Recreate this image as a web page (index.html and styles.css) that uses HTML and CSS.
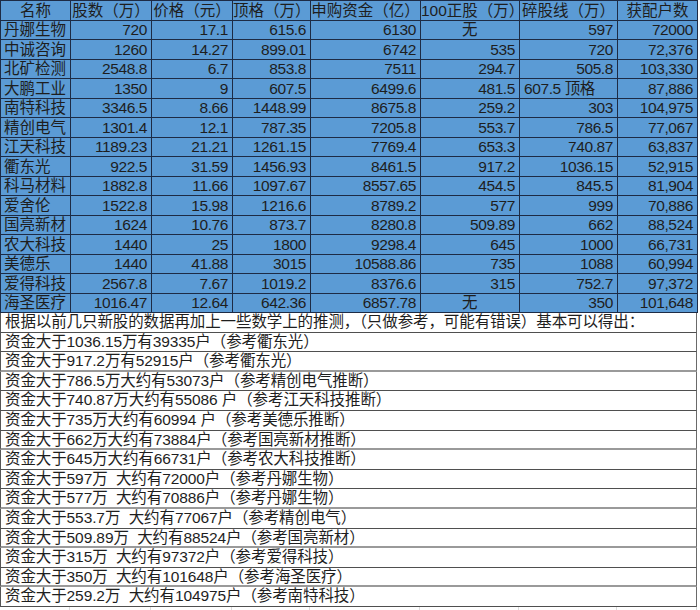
FILE: index.html
```html
<!DOCTYPE html>
<html lang="zh-CN">
<head>
<meta charset="utf-8">
<title>新股申购数据</title>
<link rel="stylesheet" href="styles.css">
</head>
<body>
<div class="sheet">
  <table class="data">
    <colgroup>
      <col class="c1"><col class="c2"><col class="c3"><col class="c4"><col class="c5"><col class="c6"><col class="c7"><col class="c8">
    </colgroup>
    <thead>
      <tr><th>名称</th><th>股数（万）</th><th>价格（元）</th><th>顶格（万）</th><th>申购资金（亿）</th><th class="ov">100正股（万）</th><th>碎股线（万）</th><th>获配户数</th></tr>
    </thead>
    <tbody>
      <tr><td class="n">丹娜生物</td><td>720</td><td>17.1</td><td>615.6</td><td>6130</td><td class="ctr">无</td><td>597</td><td>72000</td></tr>
      <tr><td class="n">中诚咨询</td><td>1260</td><td>14.27</td><td>899.01</td><td>6742</td><td>535</td><td>720</td><td>72,376</td></tr>
      <tr><td class="n">北矿检测</td><td>2548.8</td><td>6.7</td><td>853.8</td><td>7511</td><td>294.7</td><td>505.8</td><td>103,330</td></tr>
      <tr><td class="n">大鹏工业</td><td>1350</td><td>9</td><td>607.5</td><td>6499.6</td><td>481.5</td><td class="txt">607.5 顶格</td><td>87,886</td></tr>
      <tr><td class="n">南特科技</td><td>3346.5</td><td>8.66</td><td>1448.99</td><td>8675.8</td><td>259.2</td><td>303</td><td>104,975</td></tr>
      <tr><td class="n">精创电气</td><td>1301.4</td><td>12.1</td><td>787.35</td><td>7205.8</td><td>553.7</td><td>786.5</td><td>77,067</td></tr>
      <tr><td class="n">江天科技</td><td>1189.23</td><td>21.21</td><td>1261.15</td><td>7769.4</td><td>653.3</td><td>740.87</td><td>63,837</td></tr>
      <tr><td class="n">衢东光</td><td>922.5</td><td>31.59</td><td>1456.93</td><td>8461.5</td><td>917.2</td><td>1036.15</td><td>52,915</td></tr>
      <tr><td class="n">科马材料</td><td>1882.8</td><td>11.66</td><td>1097.67</td><td>8557.65</td><td>454.5</td><td>845.5</td><td>81,904</td></tr>
      <tr><td class="n">爱舍伦</td><td>1522.8</td><td>15.98</td><td>1216.6</td><td>8789.2</td><td>577</td><td>999</td><td>70,886</td></tr>
      <tr><td class="n">国亮新材</td><td>1624</td><td>10.76</td><td>873.7</td><td>8280.8</td><td>509.89</td><td>662</td><td>88,524</td></tr>
      <tr><td class="n">农大科技</td><td>1440</td><td>25</td><td>1800</td><td>9298.4</td><td>645</td><td>1000</td><td>66,731</td></tr>
      <tr><td class="n">美德乐</td><td>1440</td><td>41.88</td><td>3015</td><td>10588.86</td><td>735</td><td>1088</td><td>60,994</td></tr>
      <tr><td class="n">爱得科技</td><td>2567.8</td><td>7.67</td><td>1019.2</td><td>8376.6</td><td>315</td><td>752.7</td><td>97,372</td></tr>
      <tr><td class="n">海圣医疗</td><td>1016.47</td><td>12.64</td><td>642.36</td><td>6857.78</td><td class="ctr">无</td><td>350</td><td>101,648</td></tr>
    </tbody>
  </table>
  <div class="notes">
    <div class="line">根据以前几只新股的数据再加上一些数学上的推测，（只做参考，可能有错误）基本可以得出：</div>
    <div class="line">资金大于1036.15万有39335户（参考衢东光）</div>
    <div class="line light">资金大于917.2万有52915户（参考衢东光）</div>
    <div class="line">资金大于786.5万大约有53073户（参考精创电气推断）</div>
    <div class="line">资金大于740.87万大约有55086 户（参考江天科技推断）</div>
    <div class="line">资金大于735万大约有60994 户（参考美德乐推断）</div>
    <div class="line light">资金大于662万大约有73884户（参考国亮新材推断）</div>
    <div class="line">资金大于645万大约有66731户（参考农大科技推断）</div>
    <div class="line">资金大于597万&nbsp; 大约有72000户（参考丹娜生物）</div>
    <div class="line light">资金大于577万&nbsp; 大约有70886户（参考丹娜生物）</div>
    <div class="line">资金大于553.7万&nbsp; 大约有77067户（参考精创电气）</div>
    <div class="line light">资金大于509.89万&nbsp; 大约有88524户（参考国亮新材）</div>
    <div class="line">资金大于315万&nbsp; 大约有97372户（参考爱得科技）</div>
    <div class="line light">资金大于350万&nbsp; 大约有101648户（参考海圣医疗）</div>
    <div class="line">资金大于259.2万&nbsp; 大约有104975户（参考南特科技）</div>
  </div>
  <div class="grid">
    <span class="g1"></span><span class="g2"></span><span class="g3"></span><span class="g4"></span><span class="g5"></span><span class="g6"></span><span class="g7"></span><span class="g8"></span>
  </div>
</div>
</body>
</html>
```

FILE: styles.css
```css
html, body {
  margin: 0;
  padding: 0;
  background: #ffffff;
}

body {
  font-family: "Liberation Sans", "Noto Sans CJK SC", sans-serif;
  font-size: 15.5px;
  color: #1e1e1e;
}

.sheet {
  width: 697px;
}

.data {
  width: 697px;
  table-layout: fixed;
  border-collapse: collapse;
  background: #5b9bd5;
}

.c1 { width: 70px; }
.c2 { width: 81px; }
.c3 { width: 81px; }
.c4 { width: 78px; }
.c5 { width: 110px; }
.c6 { width: 99px; }
.c7 { width: 98px; }
.c8 { width: 80px; }

.data th,
.data td {
  height: 19.5px;
  padding: 0 4px 0 3px;
  border: 1px solid #1d2b45;
  line-height: 18px;
  vertical-align: bottom;
  white-space: nowrap;
  box-sizing: border-box;
  letter-spacing: -0.4px;
}

.data th {
  font-weight: normal;
  text-align: center;
  overflow: visible;
  padding: 0;
  letter-spacing: 0;
}

.data th.ov {
  text-align: left;
  padding-left: 0;
}

.data td {
  text-align: right;
}

.data td.n {
  text-align: left;
  padding-left: 3px;
  letter-spacing: 0;
}

.data td.ctr {
  text-align: center;
}

.data td.txt {
  text-align: left;
  padding-left: 4px;
}

.notes {
  display: flex;
  flex-direction: column;
}

.line {
  height: 19.6px;
  box-sizing: border-box;
  border-left: 1px solid #555555;
  border-right: 1px solid #6a6a6a;
  border-bottom: 1px solid #4f4f4f;
  padding-left: 4px;
  line-height: 18px;
  white-space: nowrap;
  letter-spacing: -0.1px;
}

.line.light {
  border-bottom: 2px solid #9a9a9a;
}

.grid {
  display: flex;
  height: 4px;
}

.grid span {
  border-right: 1px solid #dcdcdc;
  box-sizing: border-box;
  height: 4px;
}

.g1 { width: 70px; }
.g2 { width: 81px; }
.g3 { width: 81px; }
.g4 { width: 78px; }
.g5 { width: 110px; }
.g6 { width: 99px; }
.g7 { width: 98px; }
.g8 { width: 80px; }
```
